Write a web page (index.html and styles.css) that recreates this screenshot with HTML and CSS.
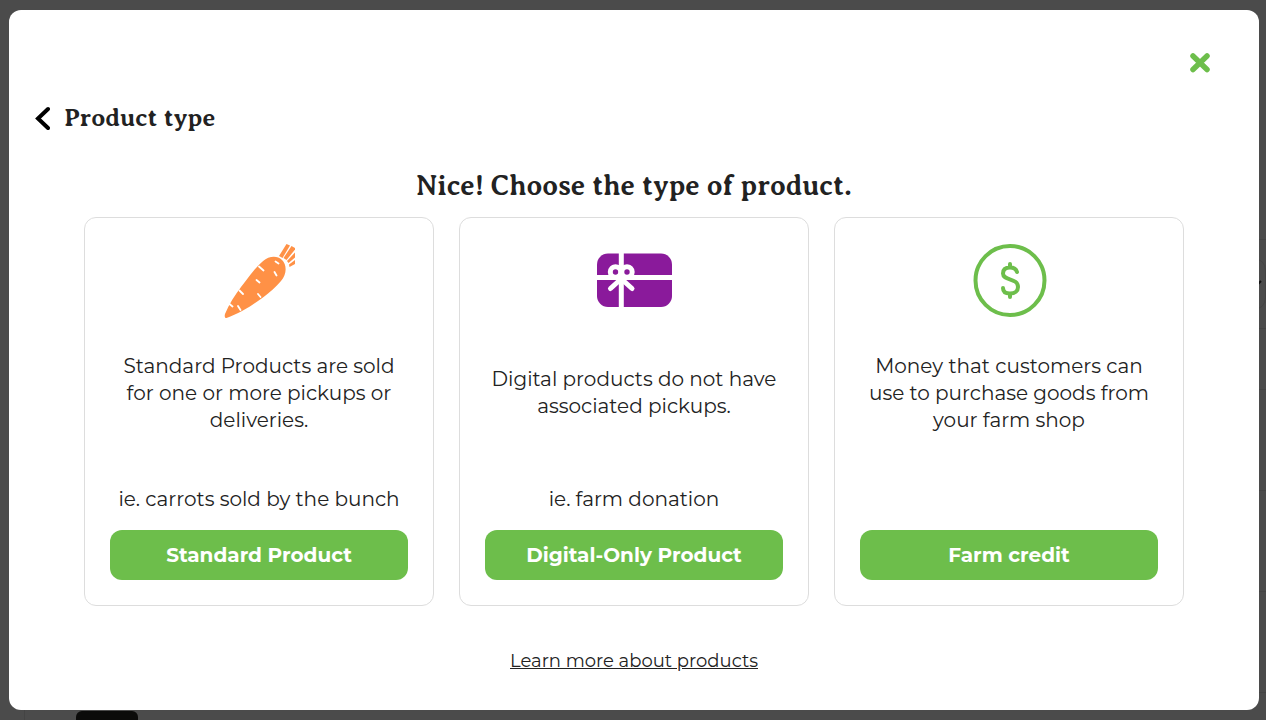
FILE: index.html
```html
<!DOCTYPE html>
<html lang="en">

<head>
    <meta charset="UTF-8">
    <meta name="viewport" content="width=device-width, initial-scale=1.0">
    <link rel="stylesheet" href="styles.css">
    <title>Product type</title>
</head>

<body>
    <!-- product list under the overlay -->
    <div class="page" aria-hidden="true">
        <div class="toolbar">
            <div class="filter">
                <svg width="12" height="8" viewBox="0 0 12 8"><path d="M1 1l5 5 5-5" fill="none" stroke="#111" stroke-width="2"/></svg>
            </div>
        </div>
        <div class="list-head"></div>
        <div class="list-row"></div>
        <div class="list-row"></div>
        <div class="list-row"></div>
        <div class="list-row">
            <div class="thumb"></div>
        </div>
    </div>

    <div class="modal" role="dialog" aria-modal="true" aria-labelledby="modal-title">
        <div class="modal-top">
            <button class="close" type="button" aria-label="Close">
                <svg width="20" height="20" viewBox="0 0 20 20"><path d="M3 3l14 13.500M17 3L3 16.500" fill="none" stroke="#6dbe4b" stroke-width="5.500" stroke-linecap="round"/></svg>
            </button>
        </div>

        <div class="modal-header">
            <button class="back" type="button" aria-label="Back">
                <svg width="16" height="24" viewBox="0 0 16 24"><path d="M14 3L4 12.500l10 9.500" fill="none" stroke="#000" stroke-width="4" stroke-linecap="round" stroke-linejoin="miter"/></svg>
            </button>
            <h1 id="modal-title">Product type</h1>
        </div>

        <h2>Nice! Choose the type of product.</h2>

        <div class="cards">
            <div class="card">
                <svg class="icon" viewBox="0 0 75 75">
                    <g fill="#ff9146">
                        <path d="M4.500 75C2.500 75 2.500 73 3 71C7 61 13 52 19 44C26 35 32 26 40 19C46 13 55 12 60 17C65 22 65 31 59 38C53 45 45 52 36 58C25 66 15 71 4.500 75z"/>
                        <path d="M57 13l7.500-12 3.500 1.500-7.500 12.500z"/>
                        <path d="M61.500 15l8-12 3.500 2v1.500l-8.500 10.500z"/>
                        <path d="M65 18l8-8.500v5l-6.500 5.500z"/>
                        <path d="M67 21.500l6-4.500v4l-5.500 3z"/>
                    </g>
                    <path d="M37 23.500l4.500 4M17.500 47.500l3.500 3.500M7.500 61l3 2.500M16 63l2.500 4M36 51l2.500 3M34.500 37l3 2.500M53.500 18.500l3 2M52.500 29l2 3.500" fill="none" stroke="#fff" stroke-width="1.800" stroke-linecap="round"/>
                </svg>
                <p class="desc">Standard Products are sold for one or more pickups or deliveries.</p>
                <p class="example">ie. carrots sold by the bunch</p>
                <button class="btn" type="button">Standard Product</button>
            </div>

            <div class="card">
                <svg class="icon" viewBox="0 0 75 75">
                    <rect x="0" y="10.500" width="75" height="53.500" rx="11" fill="#8a1a9b"/>
                    <g fill="none" stroke="#fff">
                        <path d="M24.300 10v54M0 34.500h75" stroke-width="5"/>
                        <circle cx="18.500" cy="29" r="5.200" stroke-width="5"/>
                        <circle cx="30" cy="29" r="5.200" stroke-width="5"/>
                        <path d="M24 36L13.500 45.500M24.500 36L35 45.500" stroke-width="5" stroke-linecap="round"/>
                    </g>
                </svg>
                <p class="desc">Digital products do not have associated pickups.</p>
                <p class="example">ie. farm donation</p>
                <button class="btn" type="button">Digital-Only Product</button>
            </div>

            <div class="card">
                <svg class="icon" viewBox="0 0 75 75">
                    <g fill="none" stroke="#6dbe4b" stroke-linecap="round">
                        <circle cx="38" cy="37.500" r="34.500" stroke-width="4"/>
                        <path d="M45 29C44 25.500 41.500 24.500 38 24.500C33.500 24.500 31 26.500 31 30.500C31 38 46 34.500 46 44C46 48 43 50.500 38 50.500C33.500 50.500 31 48.500 31 45M38 21v3M38 51v3" stroke-width="4"/>
                    </g>
                </svg>
                <p class="desc">Money that customers can use to purchase goods from your farm shop</p>
                <p class="example"></p>
                <button class="btn" type="button">Farm credit</button>
            </div>
        </div>

        <a class="learn" href="#">Learn more about products</a>
    </div>
</body>

</html>
```
FILE: styles.css
```css
* {
    margin: 0;
    padding: 0;
    box-sizing: border-box;
}

body {
    background-color: #4b4b4b;
    color: #222;
    font-family: Montserrat, Inter, "Open Sans", sans-serif;
    font-size: 20px;
    line-height: 27px;
}

button {
    border: none;
    background: none;
    font: inherit;
    cursor: pointer;
}

svg {
    display: block;
}

.page {
    height: 100vh;
    overflow: hidden;
    padding: 239px 0 0 24px;
}

.toolbar,
.list-head,
.list-row {
    border-top: 1px solid #444;
    border-left: 1px solid #444;
}

.toolbar {
    height: 89px;
    padding-top: 18px;
}

.filter {
    display: flex;
    align-items: center;
    justify-content: flex-end;
    height: 52px;
    padding-right: 3px;
    border: 1px solid #444;
    border-radius: 12px;
}

.list-head {
    height: 61px;
}

.list-row {
    height: 101px;
    padding: 18px 0 0 51px;
}

.thumb {
    width: 62px;
    height: 62px;
    border-radius: 6px;
    background-color: #0b0b0a;
}

.modal {
    position: fixed;
    top: 10px;
    right: 7px;
    bottom: 10px;
    left: 9px;
    display: flex;
    flex-direction: column;
    padding: 43px 25px 24px;
    border-radius: 12px;
    background-color: #fff;
    overflow: auto;
}

.modal-top {
    display: flex;
    justify-content: flex-end;
    padding-right: 24px;
}

.modal-header {
    display: flex;
    align-items: center;
    gap: 14px;
    margin-top: 29px;
}

h1,
h2 {
    font-family: "Averia Serif Libre", "Liberation Serif", serif;
    font-weight: 700;
    line-height: 32px;
}

h1 {
    font-size: 25px;
}

h2 {
    margin-top: 36px;
    font-size: 28px;
    text-align: center;
}

.cards {
    display: grid;
    grid-template-columns: repeat(3, 1fr);
    gap: 25px;
    width: 100%;
    max-width: 1100px;
    margin: 15px auto 0;
}

.card {
    display: flex;
    flex-direction: column;
    align-items: center;
    padding: 25px;
    border: 1px solid #ddd;
    border-radius: 12px;
    text-align: center;
}

.icon {
    width: 75px;
    height: 75px;
}

.desc {
    display: flex;
    align-items: center;
    min-height: 150px;
}

.example {
    min-height: 62px;
    padding-top: 18px;
}

.btn {
    width: 100%;
    height: 50px;
    border-radius: 12px;
    background-color: #6dbe4b;
    color: #fff;
    font-weight: 700;
}

.learn {
    align-self: center;
    margin-top: 42px;
    color: #222;
    font-size: 18px;
}
```
